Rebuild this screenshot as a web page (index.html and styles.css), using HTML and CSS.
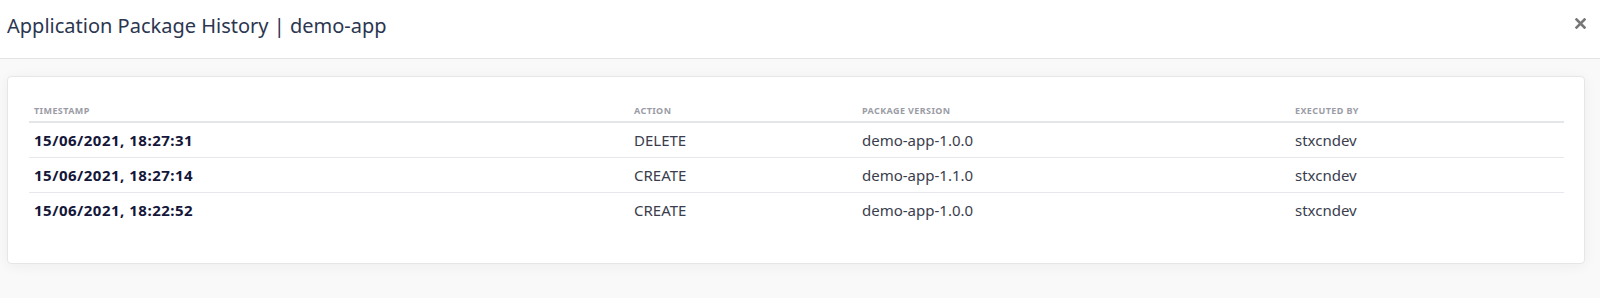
FILE: index.html
```html
<!DOCTYPE html>
<html lang="en">
<head>
    <meta charset="UTF-8">
    <title>Application Package History</title>
    <link rel="stylesheet" href="styles.css">
</head>
<body>
<div class="modal">
    <div class="modal-header">
        <h2>Application Package History | demo-app</h2>
        <button class="close-btn" aria-label="Close">
            <svg width="11" height="11" viewBox="0 0 11 11">
                <path d="M1.5 1.5 L9.5 9.5 M9.5 1.5 L1.5 9.5" stroke="#777" stroke-width="2.6" stroke-linecap="square"/>
            </svg>
        </button>
    </div>
    <div class="modal-body">
        <div class="card">
            <table class="history-table">
                <thead>
                    <tr>
                        <th class="col-time">Timestamp</th>
                        <th class="col-action">Action</th>
                        <th class="col-version">Package Version</th>
                        <th>Executed By</th>
                    </tr>
                </thead>
                <tbody>
                    <tr>
                        <td class="stamp">15/06/2021, 18:27:31</td>
                        <td>DELETE</td>
                        <td>demo-app-1.0.0</td>
                        <td>stxcndev</td>
                    </tr>
                    <tr>
                        <td class="stamp">15/06/2021, 18:27:14</td>
                        <td>CREATE</td>
                        <td>demo-app-1.1.0</td>
                        <td>stxcndev</td>
                    </tr>
                    <tr>
                        <td class="stamp">15/06/2021, 18:22:52</td>
                        <td>CREATE</td>
                        <td>demo-app-1.0.0</td>
                        <td>stxcndev</td>
                    </tr>
                </tbody>
            </table>
        </div>
    </div>
</div>
</body>
</html>
```

FILE: styles.css
```css
body {
    margin: 0;
    font-family: "Noto Sans", Arial, sans-serif;
    background: #fff;
    color: #3a3d4d;
}
.modal {
    width: 1600px;
    height: 298px;
    display: flex;
    flex-direction: column;
}
.modal-header {
    height: 59px;
    padding: 0 14px 0 7px;
    display: flex;
    align-items: center;
    justify-content: space-between;
    border-bottom: 1px solid #e4e4e4;
    background: #fff;
}
.modal-header h2 {
    margin: 0 0 7px 0;
    font-size: 20px;
    font-weight: 400;
    color: #2b3650;
}
.close-btn {
    background: none;
    border: none;
    padding: 0;
    margin-top: -11px;
    cursor: pointer;
    display: flex;
}
.modal-body {
    flex: 1;
    background: #f9f9f9;
    padding: 17px 15px 34px 7px;
}
.card {
    background: #fff;
    border: 1px solid #e6e6e6;
    border-radius: 4px;
    box-shadow: 0 2px 14px rgba(0, 0, 0, 0.05);
    padding: 18px 20px 35px 21px;
    height: 133px;
}
.history-table {
    width: 100%;
    border-collapse: collapse;
}
.history-table th {
    text-align: left;
    font-size: 9px;
    line-height: 12px;
    font-weight: 700;
    letter-spacing: 0.4px;
    text-transform: uppercase;
    color: #9b9ca6;
    padding: 10px 5px 4px;
    border-bottom: 2px solid #e5e6ea;
}
.col-time {
    width: 590px;
}
.col-action {
    width: 218px;
}
.col-version {
    width: 423px;
}
.history-table td {
    font-size: 15px;
    line-height: 18px;
    padding: 8px 5px;
    color: #3a3d4d;
    border-bottom: 1px solid #e8e8ec;
}
.history-table tbody tr:last-child td {
    border-bottom: none;
}
.history-table td.stamp {
    font-weight: 700;
    letter-spacing: 0.5px;
    color: #14163a;
}
```
